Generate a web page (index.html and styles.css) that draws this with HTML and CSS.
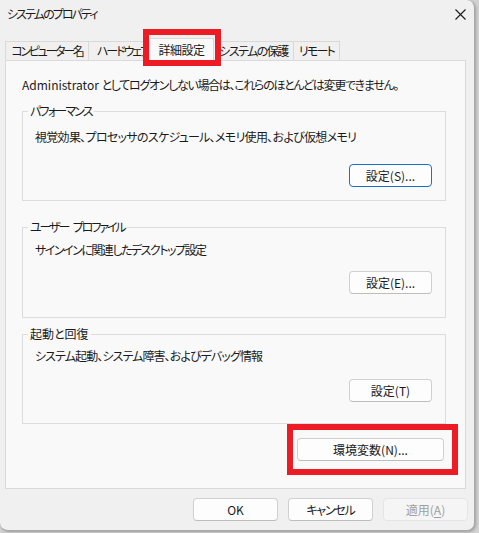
FILE: index.html
```html
<!DOCTYPE html>
<html lang="ja">
<head>
<meta charset="utf-8">
<title>システムのプロパティ</title>
<link rel="stylesheet" href="styles.css">
</head>
<body>
<div class="window">
  <div class="titlebar">
    <span class="title">システムのプロパティ</span>
    <svg class="close" width="11" height="11" viewBox="0 0 11 11"><path d="M0.5 0.5 L10.5 10.5 M10.5 0.5 L0.5 10.5" stroke="#1a1a1a" stroke-width="1.1" fill="none"/></svg>
  </div>
  <div class="tabs">
    <div class="tab t1"><span class="tl ls-tab1">コンピューター名</span></div>
    <div class="tab t2"><span class="tl ls-tab2">ハードウェア</span></div>
    <div class="tab active"><span class="tl ls-tab3">詳細設定</span></div>
    <div class="tab t4"><span class="tl ls-tab4">システムの保護</span></div>
    <div class="tab t5"><span class="tl ls-tab5">リモート</span></div>
  </div>
  <div class="panel">
    <p class="note">Administrator <span class="ls-note">としてログオンしない場合は、これらのほとんどは変更できません。</span></p>
    <fieldset class="group g1">
      <legend class="ls-l1">パフォーマンス</legend>
      <p class="desc ls-d1">視覚効果、プロセッサのスケジュール、メモリ使用、および仮想メモリ</p>
      <div class="row"><button class="btn small default">設定(S)...</button></div>
    </fieldset>
    <fieldset class="group g2">
      <legend class="ls-l2">ユーザー プロファイル</legend>
      <p class="desc ls-d2">サインインに関連したデスクトップ設定</p>
      <div class="row"><button class="btn small">設定(E)...</button></div>
    </fieldset>
    <fieldset class="group g3">
      <legend>起動と回復</legend>
      <p class="desc ls-d3">システム起動、システム障害、およびデバッグ情報</p>
      <div class="row"><button class="btn small">設定(T)</button></div>
    </fieldset>
    <div class="env-row"><button class="btn env">環境変数(N)...</button></div>
  </div>
  <div class="footer">
    <button class="btn foot">OK</button>
    <button class="btn foot ls-cancel">キャンセル</button>
    <button class="btn foot disabled">適用(<u>A</u>)</button>
  </div>
  <div class="mark mark-tab"></div>
  <div class="mark mark-env"></div>
</div>
</body>
</html>
```

FILE: styles.css
```css
* { box-sizing: border-box; }
html, body { margin: 0; padding: 0; }
body {
  width: 479px;
  height: 533px;
  overflow: hidden;
  background: #d2d2d2;
  font-family: "Noto Sans CJK JP", "Noto Sans", sans-serif;
  font-size: 12px;
  line-height: 16px;
  color: #1a1a1a;
  font-feature-settings: "palt";
}
.window {
  position: relative;
  width: 475px;
  height: 531px;
  background: #f0f0f0;
  border-right: 1px solid #a9a9a9;
  border-bottom: 1px solid #a9a9a9;
  border-radius: 0 8px 8px 8px;
  box-shadow: 1px 1px 3px rgba(0,0,0,0.25);
}
.titlebar {
  height: 28px;
  display: flex;
  align-items: center;
  justify-content: space-between;
  padding: 0 8px 0 7px;
  border-top-right-radius: 8px;
}
.title { font-size: 12px; letter-spacing: -1.9px; }
.close { display: block; }
.tabs {
  display: flex;
  align-items: flex-start;
  height: 23px;
  margin: 10px 0 -1px 5px;
  position: relative;
  z-index: 1;
}
.tab {
  height: 19px;
  margin-top: 3px;
  margin-left: -1px;
  border: 1px solid #d9d9d9;
  border-bottom: none;
  background: #f0f0f0;
  display: flex;
  align-items: center;
  justify-content: center;
  white-space: nowrap;
  overflow: hidden;
}
.tl { display: block; }
.ls-tab1 { letter-spacing: -2.3px; }
.ls-tab2 { letter-spacing: -2.1px; }
.ls-tab3 { letter-spacing: -0.5px; }
.ls-tab4 { letter-spacing: -1.5px; }
.ls-tab5 { letter-spacing: -1.8px; }
.tab.t1 { width: 84px; margin-left: 0; }
.tab.t2 { width: 62px; justify-content: flex-start; padding-left: 8px; }
.tab.active {
  width: 65px;
  height: 23px;
  margin-top: 0;
  background: #f9f9f9;
}
.tab.t4 { width: 81px; }
.tab.t5 { width: 47px; }
.panel {
  margin: 0 8px 0 5px;
  height: 429px;
  background: #f9f9f9;
  border: 1px solid #d9d9d9;
  padding: 16px 19px 0 16px;
}
.note { margin: 0; height: 16px; white-space: nowrap; }
.ls-note { letter-spacing: -1.3px; }
.group {
  margin: 0;
  padding: 0;
  min-inline-size: 0;
  border: 1px solid #dcdcdc;
}
.group legend {
  margin-left: 5px;
  padding: 0 2px;
  line-height: 16px;
}
.ls-l1 { letter-spacing: -1.8px; }
.ls-l2 { letter-spacing: -2.1px; word-spacing: 4px; }
.desc { margin: 0 0 0 12px; white-space: nowrap; }
.ls-d1 { letter-spacing: -0.7px; }
.ls-d2 { letter-spacing: -1.5px; }
.ls-d3 { letter-spacing: -0.9px; }
.row { display: flex; justify-content: flex-end; padding-right: 13px; }
.g1 { margin-top: 10px; padding-bottom: 13px; }
.g1 .desc { margin-top: 10px; }
.g1 .row { margin-top: 19px; }
.g2 { margin-top: 18px; padding-bottom: 23px; }
.g2 .desc { margin-top: 7px; }
.g2 .row { margin-top: 13px; }
.g3 { margin-top: 8px; padding-bottom: 21px; }
.g3 .desc { margin-top: 6px; }
.g3 .row { margin-top: 15px; }
.btn {
  font-family: inherit;
  font-size: 12px;
  line-height: 16px;
  color: #1a1a1a;
  height: 23px;
  padding: 0;
  background: #fdfdfd;
  border: 1px solid #d0d0d0;
  border-bottom-color: #bdbdbd;
  border-radius: 4px;
  font-feature-settings: "palt";
}
.btn.small { width: 83px; }
.btn.default { border-color: #1c6fc6; }
.env-row { display: flex; justify-content: flex-end; margin-top: 14px; padding-right: 2px; }
.btn.env { width: 147px; }
.footer {
  display: flex;
  justify-content: flex-end;
  gap: 10px;
  margin-top: 9px;
  padding-right: 6px;
}
.btn.foot { width: 85px; }
.ls-cancel { letter-spacing: -1.2px; }
.btn.disabled {
  background: #f5f5f5;
  border-color: #e5e5e5;
  color: #a0a0a0;
}
.btn.disabled u { text-decoration-thickness: 1px; text-underline-offset: 2px; }
.mark {
  position: absolute;
  border: 6px solid #ed1c24;
  z-index: 5;
}
.mark-tab { left: 143px; top: 29px; width: 78px; height: 37px; }
.mark-env { left: 287px; top: 424px; width: 171px; height: 51px; }
```
